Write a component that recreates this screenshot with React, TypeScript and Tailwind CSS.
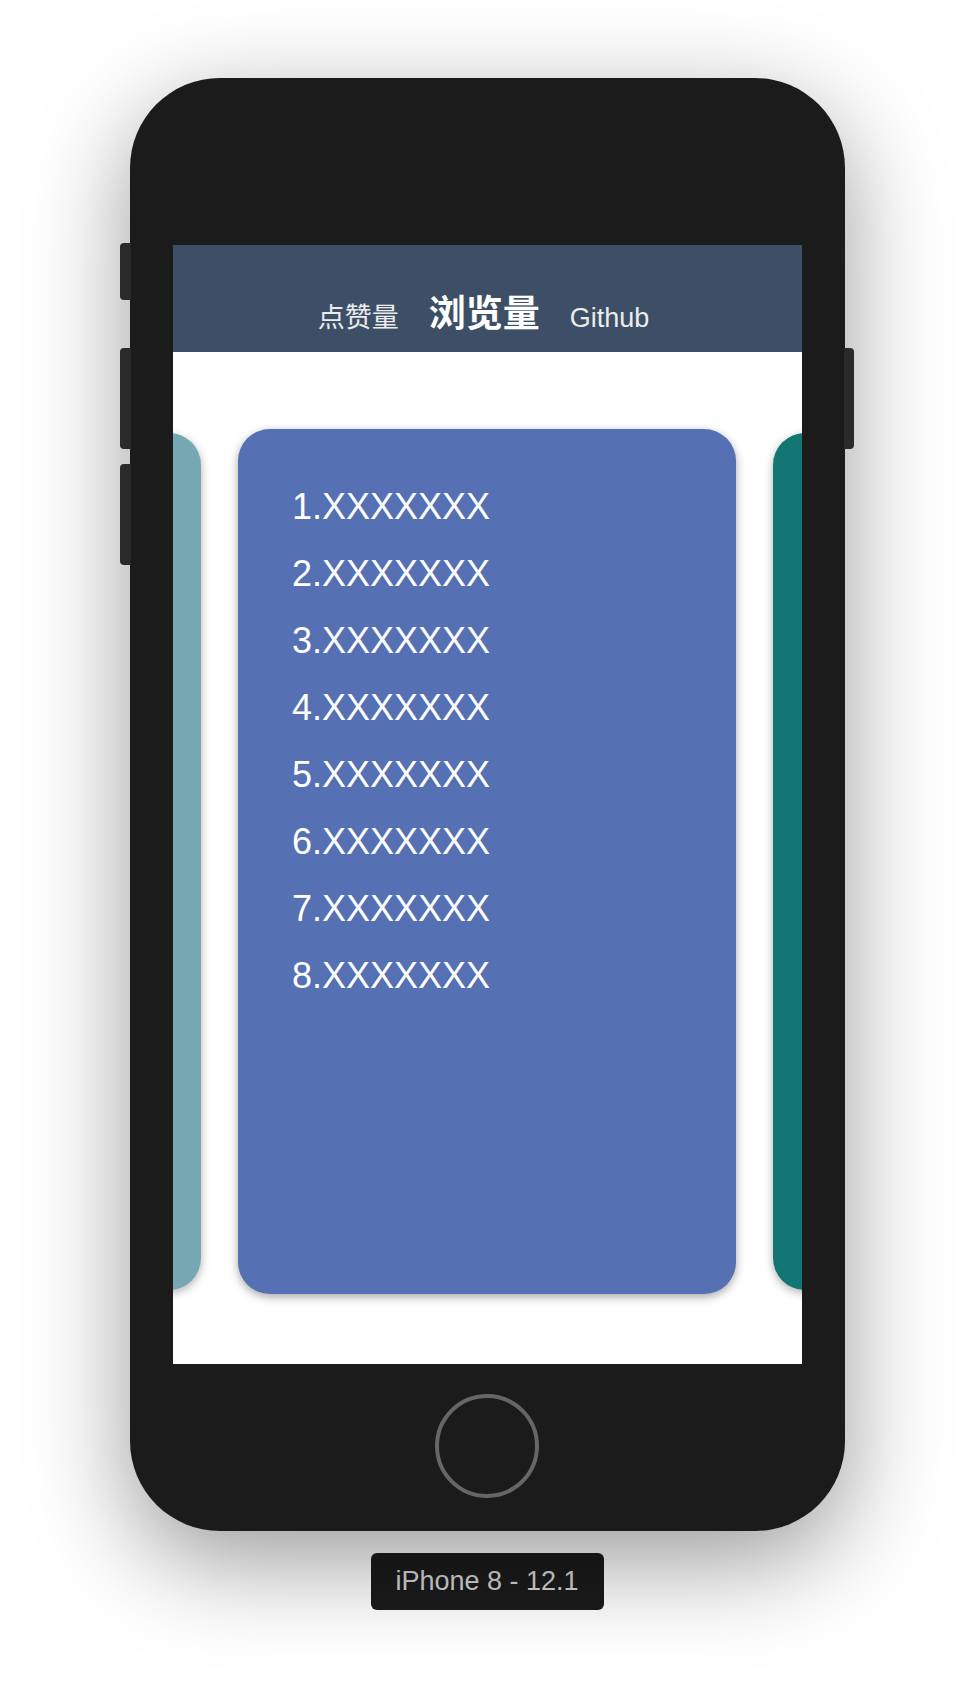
const rows = ["1.XXXXXXX", "2.XXXXXXX", "3.XXXXXXX", "4.XXXXXXX", "5.XXXXXXX", "6.XXXXXXX", "7.XXXXXXX", "8.XXXXXXX"];

function SideCard({ color }: { color: string }) {
  return <div className={`mt-[4px] h-[857px] w-[493px] shrink-0 rounded-[32px] shadow-[0_3px_10px_rgba(0,0,0,0.3)] ${color}`} />;
}

function Screen() {
  return (
    <div className="flex h-[1119px] w-[629px] flex-col bg-white">
      <header className="flex h-[107px] shrink-0 items-baseline justify-center gap-[30px] bg-[#3d4f66] pt-[48px] pr-[7px] text-white">
        <span className="text-[27px] leading-none text-[#ececec] [font-family:'Noto_Sans_CJK_SC',sans-serif]">点赞量</span>
        <span className="text-[37px] font-bold leading-none [font-family:'Noto_Sans_CJK_SC',sans-serif]">浏览量</span>
        <span className="text-[27px] leading-none text-[#ececec] [font-family:'Liberation_Sans',sans-serif]">Github</span>
      </header>
      <div className="flex flex-1 items-start justify-center gap-[37px] overflow-hidden pt-[77px]">
        <SideCard color="bg-[#76a8b4]" />
        <div className="h-[865px] w-[498px] shrink-0 rounded-[32px] bg-[#5570b3] pl-[54px] pt-[44px] shadow-[0_3px_10px_rgba(0,0,0,0.35)]">
          <ul className="text-[36px] leading-[67px] text-white [font-family:'Liberation_Sans',sans-serif]">
            {rows.map((r) => (
              <li key={r}>{r}</li>
            ))}
          </ul>
        </div>
        <SideCard color="bg-[#147674]" />
      </div>
    </div>
  );
}

export default function App() {
  return (
    <div className="flex min-h-[1682px] flex-col items-center bg-white pt-[78px]">
      <div className="relative flex h-[1453px] w-[715px] flex-col items-center rounded-[90px] bg-[#1b1b1b] pt-[167px] shadow-[0_30px_100px_rgba(0,0,0,0.4)]">
        {/* side buttons */}
        <div className="absolute left-[-10px] top-[165px] h-[57px] w-[11px] rounded-l-[4px] bg-[#2a2a2a]" />
        <div className="absolute left-[-10px] top-[270px] h-[101px] w-[11px] rounded-l-[4px] bg-[#2a2a2a]" />
        <div className="absolute left-[-10px] top-[386px] h-[101px] w-[11px] rounded-l-[4px] bg-[#2a2a2a]" />
        <div className="absolute right-[-9px] top-[270px] h-[101px] w-[10px] rounded-r-[4px] bg-[#2a2a2a]" />
        <Screen />
        <div className="mt-[30px] h-[104px] w-[104px] rounded-full border-[4px] border-[#666666]" />
      </div>
      <div className="mt-[22px] flex h-[57px] w-[233px] items-center justify-center rounded-[6px] bg-[#1b1b1b] text-[27px] text-[#d6d6d6] [font-family:'Liberation_Sans',sans-serif]">
        iPhone 8 - 12.1
      </div>
    </div>
  );
}
